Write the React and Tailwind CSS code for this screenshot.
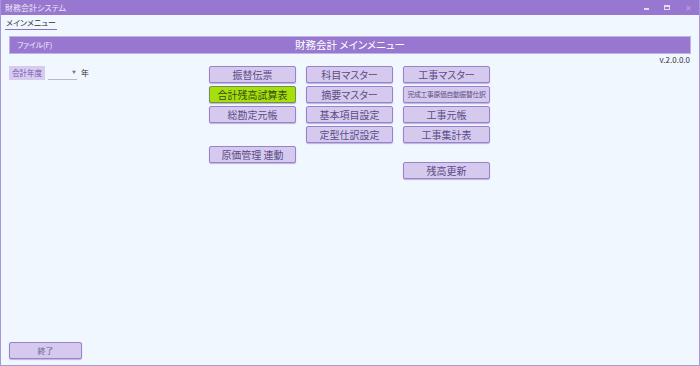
import React from 'react'

const font = "font-['Noto_Sans_CJK_JP','Noto_Sans',sans-serif] [font-feature-settings:'palt']"

function MenuButton({ label, small = false, active = false, className = '' }) {
    return (
        <button
            className={`flex items-center justify-center w-[87px] h-[17px] rounded-[2px] border-[1.5px] shadow-[0_1px_1px_rgba(80,60,140,0.35)] leading-none whitespace-nowrap overflow-hidden
                ${active ? 'bg-[#a6e00a] border-[#7a8a55] text-[#3d4a1a]' : 'bg-[#d5caee] border-[#9a80d2] text-[#5a4c86]'}
                ${small ? 'text-[6.8px] tracking-[-0.3px]' : 'text-[10px]'} ${className}`}
        >
            {label}
        </button>
    )
}

export default function App() {
    return (
        <div className={`${font} w-[700px] h-[366px] flex flex-col bg-[#f0f7ff] border border-[#a897d6] border-t-0 overflow-hidden`}>
            {/* title bar */}
            <div className="flex items-center h-[15px] px-[4px] bg-[#9777cf] text-[8px] text-[#ece6f8]">
                <span className="leading-none">財務会計システム</span>
                <div className="flex items-center gap-[15px] ml-auto mr-[3px] text-[#cfc3ec]">
                    <span className="block w-[5px] h-[1.5px] mt-[3px] bg-[#e4dcf6]" />
                    <span className="block w-[6px] h-[5px] border border-[#e4dcf6] border-t-2" />
                    <span className="text-[8px] leading-none text-[#b9a8e6]">✕</span>
                </div>
            </div>

            {/* tab */}
            <div className="flex items-start h-[16px] px-[4px] pt-[2px]">
                <div className="text-[8px] leading-[12px] text-[#333] border-b-[1.5px] border-[#8a6fc8] px-[1px]">
                    メインメニュー
                </div>
            </div>

            <div className="flex flex-col flex-1 px-[8px]">
                {/* header bar */}
                <div className="relative flex items-center h-[18px] mt-[5px] bg-[#9777cf] border border-[#c2b3e6]">
                    <span className="pl-[7px] text-[7.5px] text-[#f3effb]">ファイル(F)</span>
                    <span className="absolute inset-0 flex items-center justify-center text-[10.5px] text-white">
                        財務会計 メインメニュー
                    </span>
                </div>
                <div className="flex justify-end h-[10px] text-[8px] leading-[10px] text-[#333] pr-[1px] mt-[1px]">
                    v.2.0.0.0
                </div>

                {/* body */}
                <div className="flex items-start mt-[1px]">
                    <div className="flex items-center w-[200px]">
                        <span className="flex items-center h-[14px] px-[3px] bg-[#d8cbef] text-[7.5px] text-[#6f58b0]">会計年度</span>
                        <div className="relative ml-[3px] w-[29px] h-[14px] border-b border-[#b9b9c8]">
                            <span className="absolute right-[1px] top-[3px] text-[4px] text-[#777]">▼</span>
                        </div>
                        <span className="ml-[4px] text-[8px] text-[#333]">年</span>
                    </div>

                    <div className="flex gap-[10px]">
                        <div className="flex flex-col gap-[3px]">
                            <MenuButton label="振替伝票" />
                            <MenuButton label="合計残高試算表" active />
                            <MenuButton label="総勘定元帳" />
                            <div className="h-[17px]" />
                            <MenuButton label="原価管理 連動" />
                        </div>
                        <div className="flex flex-col gap-[3px]">
                            <MenuButton label="科目マスター" />
                            <MenuButton label="摘要マスター" />
                            <MenuButton label="基本項目設定" />
                            <MenuButton label="定型仕訳設定" />
                        </div>
                        <div className="flex flex-col gap-[3px]">
                            <MenuButton label="工事マスター" />
                            <MenuButton label="完成工事原価自動振替仕訳" small />
                            <MenuButton label="工事元帳" />
                            <MenuButton label="工事集計表" />
                            <MenuButton label="残高更新" className="mt-[16px]" />
                        </div>
                    </div>
                </div>

                <div className="flex-1" />

                <div className="pb-[6px]">
                    <button className="flex items-center justify-center w-[73px] h-[17px] rounded-[2px] border-[1.5px] border-[#9a80d2] bg-[#d5caee] shadow-[0_1px_1px_rgba(80,60,140,0.35)] text-[8px] text-[#6a5c96]">
                        終了
                    </button>
                </div>
            </div>
        </div>
    )
}
